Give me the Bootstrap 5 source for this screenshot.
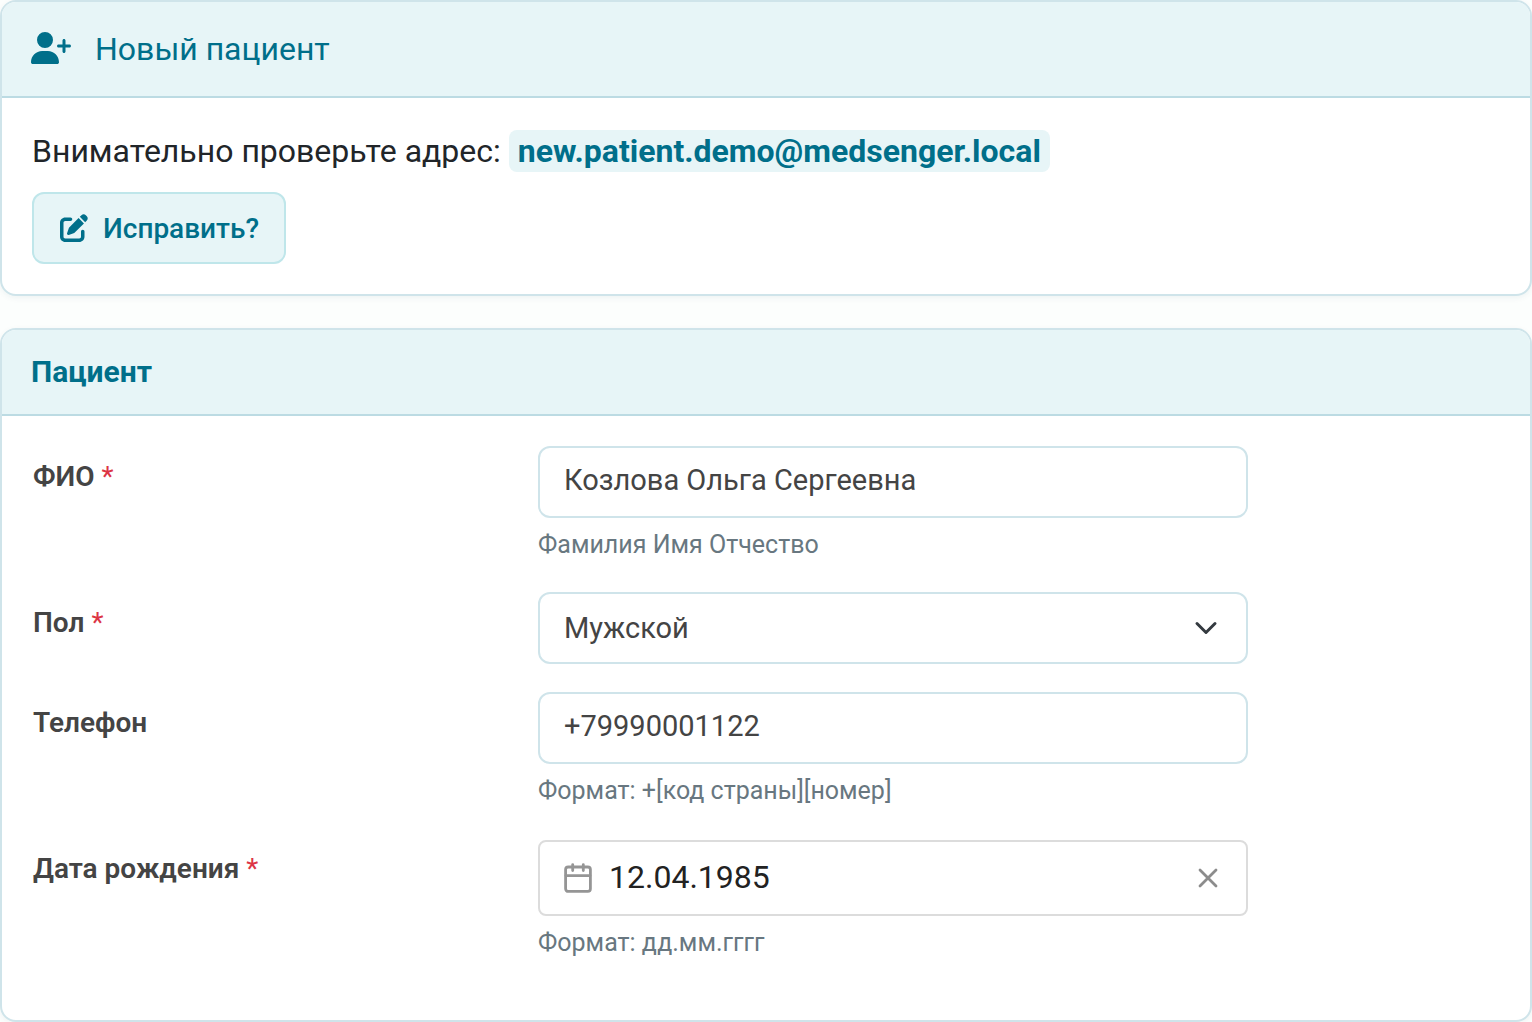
<!DOCTYPE html>
<html lang="ru">
<head>
<meta charset="utf-8">
<meta name="viewport" content="width=device-width, initial-scale=1">
<title>Новый пациент</title>
<link href="https://cdn.jsdelivr.net/npm/bootstrap@5.3.0/dist/css/bootstrap.min.css" rel="stylesheet">
<style>
  :root { --brand: #006f8a; --tint: #e7f5f7; --line: #cfe4ea; }
  body { font-family: Roboto, "Liberation Sans", sans-serif; font-size: 32px; background: #fcfefd; color: #212529; }
  .panel { border: 2px solid var(--line); border-radius: 16px; box-shadow: 0 2px 6px rgba(0, 60, 80, .06); }
  .panel + .panel { margin-top: 32px; }
  .panel-head { background: var(--tint); border-bottom: 2px solid #bcdbe3; border-radius: 14px 14px 0 0; color: var(--brand); padding: 0 29px; }
  .panel-head h1 { font-size: 32px; font-weight: 400; line-height: 94px; }
  .panel-head h2 { font-size: 30px; font-weight: 700; line-height: 84px; }
  .panel-body { padding: 30px; }
  form.panel-body { padding-left: 31px; }
  .head-icon { width: 40px; height: 32px; margin: 0 24px 2px 0; }
  .address-line { line-height: 46px; }
  .address { background: var(--tint); color: var(--brand); border-radius: 8px; padding: 2px 9px; font-weight: 700; }
  .btn-fix { --bs-btn-color: var(--brand); --bs-btn-bg: var(--tint); --bs-btn-border-color: #bfe6ea; --bs-btn-hover-color: var(--brand); --bs-btn-hover-bg: #d8eff2; --bs-btn-hover-border-color: #bfe6ea;
    border-width: 2px; border-radius: 12px; padding: 14px 25px 12px 26px; font-size: 28px; line-height: 42px; font-weight: 500; gap: 15px; margin-top: 18px; }
  .btn-fix svg { width: 28px; height: 28px; margin-bottom: 2px; }
  .field { --bs-gutter-x: 48px; margin-bottom: 28px; }
  .field-name { font-size: 28px; line-height: 42px; font-weight: 600; color: #444; padding-top: 10px; }
  .field-name span { color: #dc3545; font-weight: 400; }
  .field .form-control, .field .form-select { height: 72px; border: 2px solid var(--line); border-radius: 12px; color: #444; font-size: 29px; line-height: 44px; padding: 10px 24px 14px; }
  .field .form-select { padding: 12px 72px 12px 24px; background-size: 24px 24px; background-position: right 28px center; }
  .hint { font-size: 25px; line-height: 38px; color: #687780; margin-top: 8px; }
  .date-box { height: 76px; margin-top: 2px; border: 2px solid #dcdcdc; border-radius: 8px; background: #fff; padding: 0 24px; }
  .date-box input { font-size: 32px; color: #222; padding: 0 0 2px; margin: 0 17px; outline: 0; min-width: 0; }
  .date-box svg { width: 28px; height: 32px; display: block; }
</style>
<script src="https://cdn.jsdelivr.net/npm/bootstrap@5.3.0/dist/js/bootstrap.bundle.min.js"></script>
</head>
<body>
<main>
  <section class="panel bg-white">
    <div class="panel-head d-flex align-items-center">
      <svg class="head-icon" viewBox="0 0 640 512" fill="currentColor" aria-hidden="true"><path d="M96 128a128 128 0 1 1 256 0A128 128 0 1 1 96 128zM0 482.3C0 383.8 79.8 304 178.3 304h91.4C368.2 304 448 383.8 448 482.3c0 16.4-13.3 29.7-29.7 29.7H29.7C13.3 512 0 498.7 0 482.3zM504 312V248H440c-13.3 0-24-10.7-24-24s10.7-24 24-24h64V136c0-13.3 10.7-24 24-24s24 10.7 24 24v64h64c13.3 0 24 10.7 24 24s-10.7 24-24 24H552v64c0 13.3-10.7 24-24 24s-24-10.7-24-24z"/></svg>
      <h1 class="m-0">Новый пациент</h1>
    </div>
    <div class="panel-body">
      <div class="address-line">Внимательно проверьте адрес: <strong class="address">new.patient.demo@medsenger.local</strong></div>
      <button type="button" class="btn btn-fix d-inline-flex align-items-center">
        <svg viewBox="0 0 512 512" fill="currentColor" aria-hidden="true"><path d="M471.6 21.7c-21.9-21.9-57.3-21.9-79.2 0L362.3 51.7l97.9 97.9 30.1-30.1c21.9-21.9 21.9-57.3 0-79.2L471.6 21.7zm-299.2 220c-6.1 6.1-10.8 13.6-13.5 21.9l-29.6 88.8c-2.9 8.6-.6 18.1 5.8 24.6s15.9 8.7 24.6 5.8l88.8-29.6c8.2-2.7 15.7-7.4 21.9-13.5L437.7 172.3 339.7 74.3 172.4 241.7zM96 64C43 64 0 107 0 160V416c0 53 43 96 96 96H352c53 0 96-43 96-96V320c0-17.7-14.3-32-32-32s-32 14.3-32 32v96c0 17.7-14.3 32-32 32H96c-17.7 0-32-14.3-32-32V160c0-17.7 14.3-32 32-32h96c17.7 0 32-14.3 32-32s-14.3-32-32-32H96z"/></svg>
        Исправить?
      </button>
    </div>
  </section>

  <section class="panel bg-white">
    <div class="panel-head"><h2 class="m-0">Пациент</h2></div>
    <form class="panel-body">
      <div class="row field">
        <div class="col-4"><label class="field-name" for="fio">ФИО <span>*</span></label></div>
        <div class="col-6">
          <input class="form-control" id="fio" type="text" value="Козлова Ольга Сергеевна">
          <div class="hint">Фамилия Имя Отчество</div>
        </div>
      </div>
      <div class="row field">
        <div class="col-4"><label class="field-name" for="sex">Пол <span>*</span></label></div>
        <div class="col-6">
          <select class="form-select" id="sex"><option selected>Мужской</option><option>Женский</option></select>
        </div>
      </div>
      <div class="row field">
        <div class="col-4"><label class="field-name" for="phone">Телефон</label></div>
        <div class="col-6">
          <input class="form-control" id="phone" type="tel" value="+79990001122">
          <div class="hint">Формат: +[код страны][номер]</div>
        </div>
      </div>
      <div class="row field">
        <div class="col-4"><label class="field-name" for="birth">Дата рождения <span>*</span></label></div>
        <div class="col-6">
          <div class="date-box d-flex align-items-center">
            <svg viewBox="0 0 28 32" fill="none" stroke="#959595" stroke-width="2.8" stroke-linecap="round" aria-hidden="true"><rect x="1.6" y="5" width="24.8" height="24.4" rx="2.6"/><path d="M2 13.6h24M8.7 2.6v6M19.3 2.6v6"/></svg>
            <input class="border-0 flex-grow-1 bg-transparent" id="birth" type="text" value="12.04.1985">
            <button type="button" class="btn p-0 border-0" aria-label="Очистить"><svg viewBox="0 0 28 32" fill="none" stroke="#8c8c8c" stroke-width="2.8" stroke-linecap="round"><path d="M6 8 22 24M22 8 6 24"/></svg></button>
          </div>
          <div class="hint">Формат: дд.мм.гггг</div>
        </div>
      </div>
    </form>
  </section>
</main>
</body>
</html>
